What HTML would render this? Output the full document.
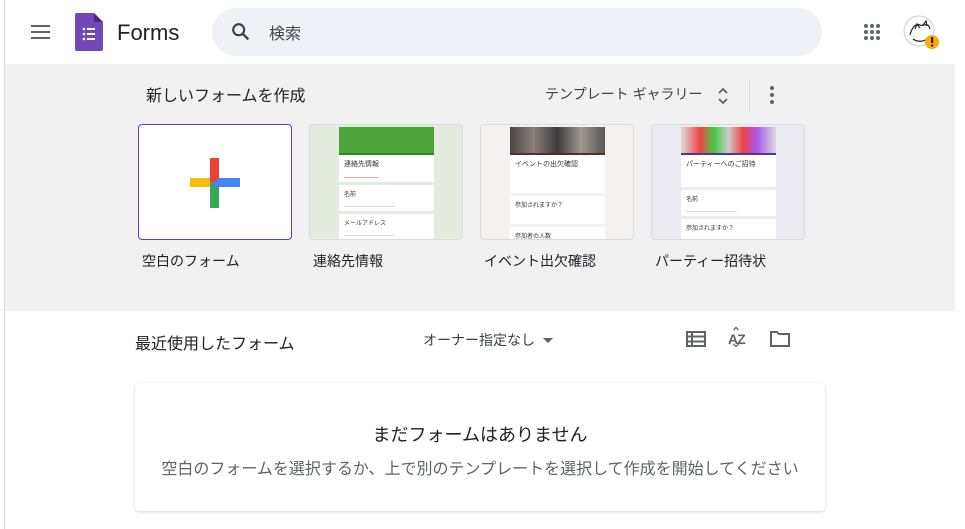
<!DOCTYPE html>
<html><head><meta charset="utf-8"><style>
*{margin:0;padding:0;box-sizing:border-box}
body{width:965px;height:529px;overflow:hidden;background:#fff;font-family:"Liberation Sans","Noto Sans CJK JP",sans-serif;position:relative;color:#202124}
.a{position:absolute}
.gray{left:5px;top:64px;width:950px;height:247px;background:#f1f1f1}
.card{position:absolute;top:124px;width:154px;height:116px;border:1px solid #dadce0;border-radius:4px;overflow:hidden}
.doc{position:absolute;left:29px;top:2px;width:95px;height:114px}
.img{height:26px}
.bar{height:2px}
.sec{background:#fff;margin-top:3px;padding:4px 5px;border-radius:1px}
.t{font-size:6px;color:#333}
.ln{height:1px;background:#ddd;margin-top:8px;width:60%}
.lbl{position:absolute;top:251px;font-size:14px;color:#202124}
</style></head><body>
<div class="a" style="left:4px;top:0;width:1px;height:529px;background:#ddd"></div>
<svg class="a" style="left:30px;top:22px" width="22" height="20" viewBox="0 0 22 20"><rect x="1" y="3" width="19" height="2" fill="#5f6368"/><rect x="1" y="9" width="19" height="2" fill="#5f6368"/><rect x="1" y="15" width="19" height="2" fill="#5f6368"/></svg>
<svg class="a" style="left:75px;top:13px" width="28" height="38" viewBox="0 0 28 38"><path d="M2 0H19L28 9V36a2 2 0 0 1-2 2H2a2 2 0 0 1-2-2V2a2 2 0 0 1 2-2z" fill="#7248b9"/><path d="M19 0L28 9H19z" fill="#4a2a8a"/><g fill="#fff"><circle cx="9" cy="16" r="1.3"/><circle cx="9" cy="21" r="1.3"/><circle cx="9" cy="26" r="1.3"/><rect x="12" y="15" width="8" height="2"/><rect x="12" y="20" width="8" height="2"/><rect x="12" y="25" width="8" height="2"/></g></svg>
<div class="a" style="left:117px;top:20px;font-size:22px;color:#202124">Forms</div>
<div class="a" style="left:212px;top:8px;width:610px;height:48px;border-radius:24px;background:#eef2f7"></div>
<svg class="a" style="left:230px;top:21px" width="22" height="22" viewBox="0 0 24 24"><circle cx="9.5" cy="9.5" r="6" fill="none" stroke="#3c4043" stroke-width="2.3"/><path d="M14 14l6 6" stroke="#3c4043" stroke-width="2.6"/></svg>
<div class="a" style="left:269px;top:20px;font-size:16px;color:#444">検索</div>
<svg class="a" style="left:863px;top:23px" width="18" height="18" viewBox="0 0 18 18" fill="#5f6368"><circle cx="3" cy="3" r="2"/><circle cx="9" cy="3" r="2"/><circle cx="15" cy="3" r="2"/><circle cx="3" cy="9" r="2"/><circle cx="9" cy="9" r="2"/><circle cx="15" cy="9" r="2"/><circle cx="3" cy="15" r="2"/><circle cx="9" cy="15" r="2"/><circle cx="15" cy="15" r="2"/></svg>
<svg class="a" style="left:903px;top:15px" width="38" height="36" viewBox="0 0 38 36"><circle cx="16" cy="16" r="15" fill="#fff" stroke="#ccc"/><path d="M7 20c2-8 6-12 10-10s8-4 10 4M10 24c4 3 10 3 14 0M12 14l2-5 3 4M20 10l3-4 1 5" fill="none" stroke="#222" stroke-width="1.2"/><circle cx="29" cy="27" r="7" fill="#f9ab00"/><rect x="28" y="22" width="2.2" height="6" fill="#202124"/><rect x="28" y="29.5" width="2.2" height="2" fill="#202124"/></svg>
<div class="a gray"></div>
<div class="a" style="left:146px;top:82px;font-size:16px">新しいフォームを作成</div>
<div class="a" style="left:545px;top:84px;font-size:14px;color:#3c4043">テンプレート ギャラリー</div>
<svg class="a" style="left:716px;top:86px" width="14" height="20" viewBox="0 0 14 20"><path d="M3 7l4-4 4 4M3 13l4 4 4-4" fill="none" stroke="#5f6368" stroke-width="1.8"/></svg>
<div class="a" style="left:749px;top:80px;width:1px;height:32px;background:#dadce0"></div>
<svg class="a" style="left:768px;top:85px" width="8" height="20" viewBox="0 0 8 20" fill="#5f6368"><circle cx="4" cy="3" r="2"/><circle cx="4" cy="10" r="2"/><circle cx="4" cy="17" r="2"/></svg>

<div class="card" style="left:138px;background:#fff;border-color:#673ab7">
<svg class="a" style="left:51px;top:32px" width="52" height="52" viewBox="0 0 52 52"><rect x="0" y="21" width="27" height="9" fill="#fbbc04"/><rect x="20" y="1" width="9" height="26" fill="#ea4335"/><rect x="20" y="25" width="9" height="26" fill="#34a853"/><path d="M20 30L29 21H50V30z" fill="#4285f4"/></svg>
</div>
<div class="card" style="left:309px;background:#e3ecdf">
<div class="doc"><div class="img" style="background:#4ea43a"></div><div class="bar" style="background:#2d8a1e"></div>
<div class="sec" style="margin-top:0"><div class="t" style="font-size:7px">連絡先情報</div><div class="ln" style="background:#f3a5a5;width:40%"></div></div>
<div class="sec"><div class="t">名前</div><div class="ln"></div></div><div class="sec"><div class="t">メールアドレス</div><div class="ln"></div></div><div class="sec"><div class="t">住所</div><div class="ln"></div></div></div></div>
<div class="card" style="left:480px;background:#f3f2f0">
<div class="doc"><div class="img" style="background:linear-gradient(90deg,#4a4a4a,#8a7f78,#3c3c3c,#a09890,#555)"></div><div class="bar" style="background:#5b2a2a"></div>
<div class="sec" style="margin-top:0;height:38px"><div class="t" style="font-size:7px">イベントの出欠確認</div></div>
<div class="sec" style="height:28px"><div class="t">参加されますか？</div></div><div class="sec"><div class="t">参加者の人数</div><div class="ln"></div></div></div></div>
<div class="card" style="left:651px;background:#ebebf1">
<div class="doc"><div class="img" style="background:linear-gradient(90deg,#ddd,#e44 20%,#4c4 35%,#ccc 50%,#e44 65%,#a5e 80%,#ddd)"></div><div class="bar" style="background:#4b3b8f"></div>
<div class="sec" style="margin-top:0;height:32px"><div class="t" style="font-size:7px">パーティーへのご招待</div></div>
<div class="sec"><div class="t">名前</div><div class="ln"></div></div><div class="sec" style="height:26px"><div class="t">参加されますか？</div></div></div></div>
<div class="lbl" style="left:142px">空白のフォーム</div>
<div class="lbl" style="left:313px">連絡先情報</div>
<div class="lbl" style="left:484px">イベント出欠確認</div>
<div class="lbl" style="left:655px">パーティー招待状</div>
<div class="a" style="left:135px;top:330px;font-size:16px">最近使用したフォーム</div>
<div class="a" style="left:423px;top:330px;font-size:14px;color:#3c4043">オーナー指定なし</div>
<svg class="a" style="left:542px;top:337px" width="12" height="8"><path d="M1 1h10L6 6z" fill="#5f6368"/></svg>
<svg class="a" style="left:686px;top:331px" width="20" height="16" viewBox="0 0 20 16"><rect x="1" y="1" width="18" height="14" fill="none" stroke="#5f6368" stroke-width="2"/><path d="M1 5.5h18M1 10.5h18M6 1v14" stroke="#5f6368" stroke-width="2"/></svg>
<div class="a" style="left:728px;top:331px;font-size:14px;font-weight:bold;color:#5f6368;letter-spacing:-1px">AZ</div>
<svg class="a" style="left:733px;top:327px" width="6" height="20"><path d="M0.5 3L3 0.5 5.5 3M0.5 17L3 19.5 5.5 17" fill="none" stroke="#5f6368" stroke-width="1.3"/></svg>
<svg class="a" style="left:769px;top:330px" width="22" height="18" viewBox="0 0 22 18"><path d="M2 2h6l2 2h10v12H2z" fill="none" stroke="#5f6368" stroke-width="2"/></svg>
<div class="a" style="left:135px;top:383px;width:690px;height:128px;background:#fff;border-radius:4px;box-shadow:0 1px 3px rgba(0,0,0,.15)"></div>
<div class="a" style="left:135px;top:421px;width:690px;text-align:center;font-size:18px;color:#202124">まだフォームはありません</div>
<div class="a" style="left:135px;top:455px;width:690px;text-align:center;font-size:16px;color:#5f6368">空白のフォームを選択するか、上で別のテンプレートを選択して作成を開始してください</div>
</body></html>
